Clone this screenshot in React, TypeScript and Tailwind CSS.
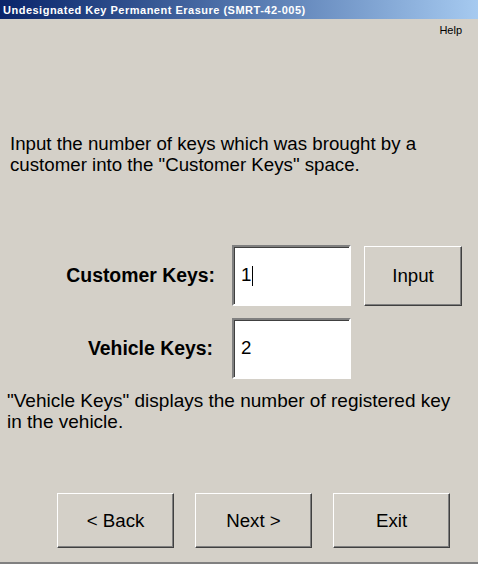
import React from "react"

const FONT = "font-['Liberation_Sans',Arial,sans-serif]"

const sunken =
  "border-2 border-t-[#808080] border-l-[#808080] border-b-white border-r-white bg-white shadow-[inset_1px_1px_0_#404040]"

const raised =
  "border border-t-white border-l-white border-b-[#404040] border-r-[#404040] bg-[#d4d0c8] shadow-[inset_-1px_-1px_0_#808080]"

const KeyField = ({ value, caret }: { value: string; caret?: boolean }) => (
  <div className={`w-[119px] h-[61px] flex items-center pl-[7px] ${sunken}`}>
    <span className="text-[18.7px] text-black leading-none">{value}</span>
    {caret && <span className="w-px h-[20px] bg-black ml-[1px]" />}
  </div>
)

const WinButton = ({ label, className }: { label: string; className: string }) => (
  <button className={`flex items-center justify-center pt-[1px] text-[18.7px] text-black ${raised} ${className}`}>
    {label}
  </button>
)

export default function App() {
  return (
    <div className={`w-[478px] h-[564px] bg-[#d4d0c8] flex flex-col border-b-2 border-b-[#808080] ${FONT}`}>
      <div className="h-[19px] flex items-center pl-[3px] pt-[1px] bg-gradient-to-r from-[#0a246a] to-[#a6caf0]">
        <span className="text-[11px] font-bold text-white tracking-[0.5px]">
          Undesignated Key Permanent Erasure (SMRT-42-005)
        </span>
      </div>

      <div className="h-[22px] flex items-center justify-end pr-[16px]">
        <span className="text-[11px] text-black">Help</span>
      </div>

      <p className="mt-[92px] pl-[10px] pr-[40px] text-[18.7px] leading-[21px] text-black">
        Input the number of keys which was brought by a customer into the "Customer Keys" space.
      </p>

      <div className="mt-[70px] flex flex-col gap-[12px]">
        <div className="flex items-center">
          <span className="w-[215px] text-right text-[19.4px] font-bold text-black">Customer Keys:</span>
          <div className="ml-[17px]">
            <KeyField value="1" caret />
          </div>
          <WinButton label="Input" className="ml-[13px] w-[98px] h-[60px]" />
        </div>
        <div className="flex items-center">
          <span className="w-[213px] text-right text-[19.4px] font-bold text-black">Vehicle Keys:</span>
          <div className="ml-[19px]">
            <KeyField value="2" />
          </div>
        </div>
      </div>

      <p className="mt-[11px] pl-[7px] pr-[20px] text-[19px] leading-[21px] text-black">
        "Vehicle Keys" displays the number of registered key in the vehicle.
      </p>

      <div className="mt-auto mb-[14px] flex pl-[57px] gap-[21px]">
        <WinButton label="< Back" className="w-[117px] h-[55px]" />
        <WinButton label="Next >" className="w-[117px] h-[55px]" />
        <WinButton label="Exit" className="w-[117px] h-[55px]" />
      </div>
    </div>
  )
}
